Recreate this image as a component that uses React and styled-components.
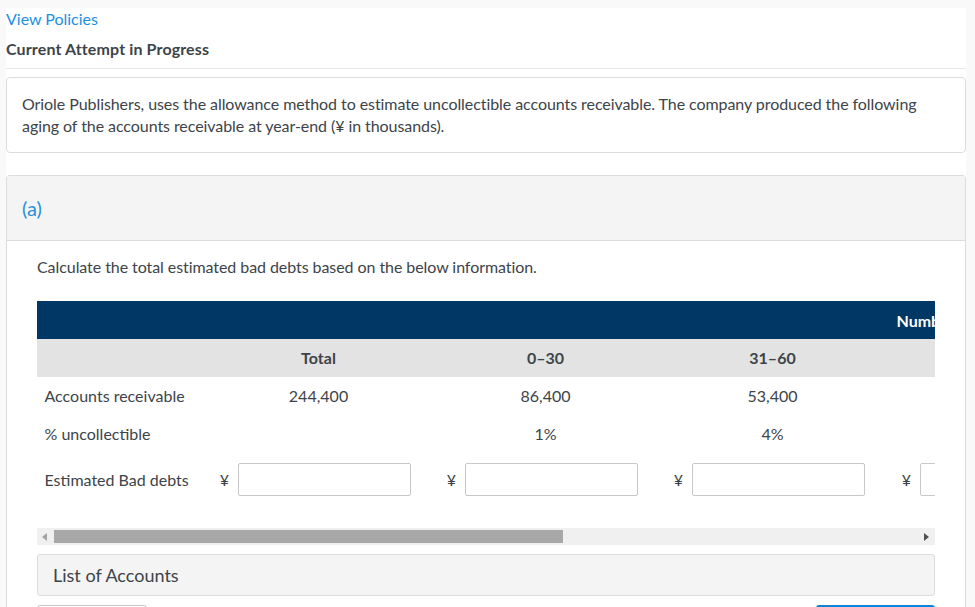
import styled, { createGlobalStyle } from "styled-components";

const GlobalStyle = createGlobalStyle`
  html, body {
    margin: 0;
    padding: 0;
    background: #f9f9f9;
    overflow: hidden;
  }
  body {
    font-family: Lato, "Liberation Sans", sans-serif;
    color: #3d4449;
  }
`;

const columns = [
  { head: "Total", receivable: "244,400", percent: "" },
  { head: "0–30", receivable: "86,400", percent: "1%" },
  { head: "31–60", receivable: "53,400", percent: "4%" },
  { head: "", receivable: "", percent: "" },
];

const App = () => {
  return (
    <>
      <GlobalStyle />
      <Page>
        <Content>
          <Header>
            <PolicyLink>View Policies</PolicyLink>
            <AttemptTitle>Current Attempt in Progress</AttemptTitle>
          </Header>
          <IntroCard>
            Oriole Publishers, uses the allowance method to estimate uncollectible accounts receivable. The company
            produced the following aging of the accounts receivable at year-end (¥ in thousands).
          </IntroCard>
          <PartCard>
            <PartHeader>(a)</PartHeader>
            <PartBody>
              <Question>Calculate the total estimated bad debts based on the below information.</Question>
              <TableClip>
                <Grid>
                  <BlueRow>
                    <BlueLabel>Numb</BlueLabel>
                  </BlueRow>
                  <HeadCell />
                  {columns.map((col, index) => (
                    <HeadCell key={index}>{col.head}</HeadCell>
                  ))}
                  <LabelCell>Accounts receivable</LabelCell>
                  {columns.map((col, index) => (
                    <ValueCell key={index}>{col.receivable}</ValueCell>
                  ))}
                  <LabelCell>% uncollectible</LabelCell>
                  {columns.map((col, index) => (
                    <ValueCell key={index}>{col.percent}</ValueCell>
                  ))}
                  <InputLabelCell>Estimated Bad debts</InputLabelCell>
                  {columns.map((col, index) => (
                    <InputCell key={index}>
                      <Yen>¥</Yen>
                      <AmountInput aria-label="Estimated bad debts" />
                    </InputCell>
                  ))}
                </Grid>
              </TableClip>
              <ScrollBar>
                <ScrollArrow viewBox="0 0 6 8">
                  <path d="M5 0v8L0 4z" fill="#a3a3a3" />
                </ScrollArrow>
                <ScrollTrack>
                  <ScrollThumb />
                </ScrollTrack>
                <ScrollArrow viewBox="0 0 6 8">
                  <path d="M1 0v8l5-4z" fill="#505050" />
                </ScrollArrow>
              </ScrollBar>
              <AccountsBar>List of Accounts</AccountsBar>
              <ButtonRow>
                <OutlineButton />
                <PrimaryButton />
              </ButtonRow>
            </PartBody>
          </PartCard>
        </Content>
      </Page>
    </>
  );
};

export default App;

const Page = styled.div`
  box-sizing: border-box;
  width: 975px;
  height: 607px;
  overflow: hidden;
  padding: 8px 9px 0 6px;
`;

const Content = styled.div`
  background: #fff;
  height: 599px;
  overflow: hidden;
`;

const Header = styled.div`
  display: flex;
  flex-direction: column;
  height: 60px;
  border-bottom: 1px solid #e8e8e8;
  margin-bottom: 8px;
`;

const PolicyLink = styled.a`
  font-size: 16px;
  line-height: 22px;
  letter-spacing: -0.02px;
  color: #1e8fe1;
`;

const AttemptTitle = styled.div`
  margin-top: 8px;
  font-size: 16px;
  line-height: 22px;
  font-weight: 700;
  letter-spacing: 0.13px;
  color: #3d4449;
`;

const IntroCard = styled.div`
  box-sizing: border-box;
  height: 76px;
  padding: 15px 15px 0;
  border: 1px solid #dcdcdc;
  border-radius: 4px;
  font-size: 16px;
  line-height: 22px;
  letter-spacing: -0.07px;
  color: #3d4449;
  margin-bottom: 22px;
`;

const PartCard = styled.div`
  border: 1px solid #dcdcdc;
  border-bottom: 0;
  border-radius: 4px 4px 0 0;
  height: 440px;
`;

const PartHeader = styled.div`
  box-sizing: border-box;
  height: 65px;
  padding: 18px 15px 0;
  background: #f4f4f4;
  border-bottom: 1px solid #dcdcdc;
  font-size: 20px;
  line-height: 28px;
  color: #2b8fd9;
`;

const PartBody = styled.div`
  padding: 15px 30px 0;
`;

const Question = styled.div`
  font-size: 16px;
  line-height: 22px;
  letter-spacing: -0.07px;
  margin-bottom: 23px;
`;

const TableClip = styled.div`
  overflow: hidden;
`;

const Grid = styled.div`
  display: grid;
  grid-template-columns: 168px 227px 227px 227px 228px;
  width: 1077px;
`;

const BlueRow = styled.div`
  grid-column: 1 / -1;
  height: 38px;
  background: #003764;
  display: flex;
  align-items: center;
`;

const BlueLabel = styled.span`
  margin-left: 859.5px;
  font-size: 16px;
  font-weight: 700;
  color: #fff;
`;

const HeadCell = styled.div`
  height: 38px;
  line-height: 38px;
  background: #e3e3e3;
  text-align: center;
  font-size: 16px;
  font-weight: 700;
`;

const LabelCell = styled.div`
  height: 38px;
  line-height: 38px;
  padding-left: 7.5px;
  font-size: 16px;
`;

const ValueCell = styled.div`
  height: 38px;
  line-height: 38px;
  text-align: center;
  font-size: 16px;
`;

const InputLabelCell = styled(LabelCell)`
  height: 53px;
  line-height: 54px;
`;

const InputCell = styled.div`
  display: flex;
  align-items: center;
  justify-content: flex-end;
  height: 53px;
  gap: 9px;
  padding-right: 21px;
`;

const Yen = styled.span`
  font-size: 16px;
`;

const AmountInput = styled.input`
  box-sizing: border-box;
  flex: none;
  width: 173px;
  height: 33px;
  border: 1px solid #c8c8c8;
  border-radius: 2px;
  background: #fff;
`;

const ScrollBar = styled.div`
  display: flex;
  align-items: center;
  height: 17px;
  margin-top: 22px;
  background: #f0f0f0;
`;

const ScrollArrow = styled.svg`
  flex: none;
  width: 6px;
  height: 8px;
  margin: 0 6px 0 5px;
`;

const ScrollTrack = styled.div`
  flex: 1;
  height: 13px;
`;

const ScrollThumb = styled.div`
  width: 509px;
  height: 13px;
  background: #a8a8a8;
`;

const AccountsBar = styled.div`
  box-sizing: border-box;
  height: 42px;
  margin-top: 9px;
  padding-left: 15px;
  line-height: 40px;
  font-size: 18px;
  background: #f4f4f4;
  border: 1px solid #dcdcdc;
  border-radius: 3px;
  color: #3d4449;
`;

const ButtonRow = styled.div`
  display: flex;
  justify-content: space-between;
  margin-top: 9px;
`;

const OutlineButton = styled.div`
  width: 110px;
  height: 36px;
  border: 1px solid #c8c8c8;
  border-radius: 3px;
  box-sizing: border-box;
`;

const PrimaryButton = styled.div`
  width: 119px;
  height: 36px;
  border-radius: 3px;
  background: #0a84d6;
`;
